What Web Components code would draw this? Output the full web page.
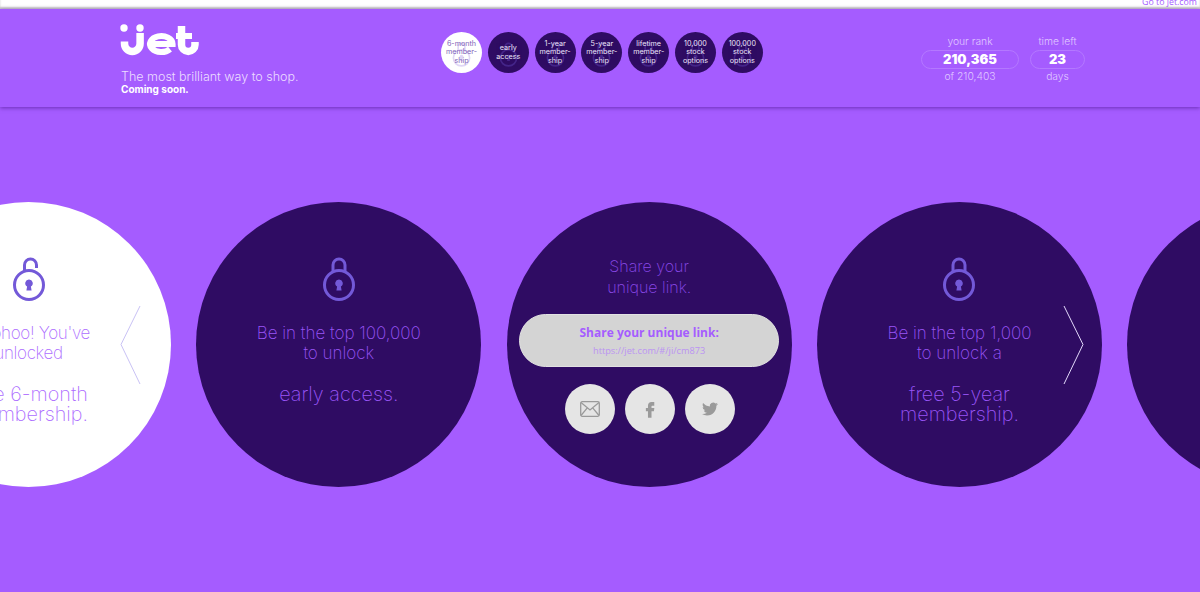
<!DOCTYPE html>
<html>
<head>
<meta charset="utf-8">
<title>Jet - rewards</title>
<style>
  html, body { margin: 0; height: 592px; overflow: hidden; background: #a55cff; font-family: Inter, "Liberation Sans", sans-serif; }
</style>
</head>
<body>
<jet-topbar></jet-topbar>
<jet-header>
  <reward-dot active>6-month<br>member-<br>ship</reward-dot>
  <reward-dot>early<br>access</reward-dot>
  <reward-dot>1-year<br>member-<br>ship</reward-dot>
  <reward-dot>5-year<br>member-<br>ship</reward-dot>
  <reward-dot>lifetime<br>member-<br>ship</reward-dot>
  <reward-dot>10,000<br>stock<br>options</reward-dot>
  <reward-dot>100,000<br>stock<br>options</reward-dot>
  <stat-box slot="stats" label="your rank" value="210,365" note="of 210,403" style="width:98px"></stat-box>
  <stat-box slot="stats" label="time left" value="23" note="days" style="width:55px"></stat-box>
</jet-header>
<reward-carousel>
  <reward-circle light open-lock line1="Woohoo! You've" line2="unlocked" prize="free 6-month<br>membership."></reward-circle>
  <reward-circle line1="Be in the top 100,000" line2="to unlock" prize="early access."></reward-circle>
  <share-circle url="https://jet.com/#/ji/cm873"></share-circle>
  <reward-circle line1="Be in the top 1,000" line2="to unlock a" prize="free 5-year<br>membership."></reward-circle>
  <reward-circle></reward-circle>
</reward-carousel>

<script>
  const LOCK_CLOSED = 'M11 15 V8 a6 6 0 0 1 12 0 V15';
  const LOCK_OPEN = 'M12.500 15 V8 a6 6 0 0 1 12 0 V11';

  class lockIcon extends HTMLElement {
    constructor () {
      super();
      const shackle = this.hasAttribute('open') ? LOCK_OPEN : LOCK_CLOSED;
      this.attachShadow({mode: 'open'}).innerHTML = `
        <style>:host { display: block; width: 34px; height: 44px; color: #7359d8; } svg { display: block; width: 100%; height: 100%; }</style>
        <svg viewBox="0 0 34 44" fill="none" stroke="currentColor" stroke-width="3">
          <path d="${shackle}"/>
          <circle cx="17" cy="28" r="14.500"/>
          <path d="M17 22.500a3.700 3.700 0 0 1 1.900 6.900l.7 4.100h-5.200l.7-4.100a3.700 3.700 0 0 1 1.900-6.900z" fill="currentColor" stroke="none"/>
        </svg>`;
    }
  }
  customElements.define('lock-icon', lockIcon);

  class jetLogo extends HTMLElement {
    constructor () {
      super();
      this.attachShadow({mode: 'open'}).innerHTML = `
        <style>:host { display: block; width: 80px; height: 33px; margin-left: -1px; } svg { display: block; }</style>
        <svg width="80" height="33" viewBox="120 24 80 33" fill="none" stroke="#fff" stroke-width="7">
          <circle cx="124" cy="28" r="3.700" fill="#fff" stroke="none"/>
          <circle cx="140" cy="28" r="3.700" fill="#fff" stroke="none"/>
          <path d="M124.500 41.500v2a7.800 8 0 0 0 15.600 0V33" stroke-width="7.500"/>
          <path d="M150 44h22.600A11.300 8 0 1 0 170 49.100" stroke-width="6"/>
          <path d="M181.500 26V44.700a6.750 6.750 0 0 0 13.500 0V42" stroke-width="7.500"/>
          <path d="M176 36h16" stroke-width="6"/>
        </svg>`;
    }
  }
  customElements.define('jet-logo', jetLogo);

  class jetTopbar extends HTMLElement {
    constructor () {
      super();
      this.attachShadow({mode: 'open'}).innerHTML = `
        <style>
          :host { display: flex; justify-content: flex-end; height: 9px; overflow: hidden; background: #fff; box-shadow: inset 0 -2px 2px rgba(0,0,0,.22); }
          span { margin: -4px 3px 0 0; font: 8.800px/12px "Open Sans", sans-serif; color: #a55cff; }
        </style>
        <span>Go to jet.com</span>`;
    }
  }
  customElements.define('jet-topbar', jetTopbar);

  class jetHeader extends HTMLElement {
    constructor () {
      super();
      this.attachShadow({mode: 'open'}).innerHTML = `
        <style>
          :host { display: flex; position: relative; height: 98px; box-sizing: border-box; padding: 15px 0 0 121px; background: #a55cff; box-shadow: 0 1px 4px rgba(60,10,120,.55); color: #fff; }
          .brand { width: 320px; }
          .tag { margin-top: 12px; font-size: 12.500px; font-weight: 300; line-height: 15px; color: #ecdcff; white-space: nowrap; }
          .soon { font-size: 10px; font-weight: 700; line-height: 11px; color: #fff; }
          nav { display: flex; gap: 5.800px; width: 480px; padding-top: 8px; box-sizing: border-box; }
          .stats { display: flex; gap: 11px; padding-top: 11px; }
        </style>
        <div class="brand">
          <jet-logo></jet-logo>
          <div class="tag">The most brilliant way to shop.</div>
          <div class="soon">Coming soon.</div>
        </div>
        <nav><slot></slot></nav>
        <div class="stats"><slot name="stats"></slot></div>`;
    }
  }
  customElements.define('jet-header', jetHeader);

  class rewardDot extends HTMLElement {
    constructor () {
      super();
      this.attachShadow({mode: 'open'}).innerHTML = `
        <style>
          :host { display: grid; place-items: center; flex: none; width: 41px; height: 41px; border-radius: 50%; background: #2f0c63; color: #efe6fb; font-size: 7.200px; line-height: 8.400px; text-align: center; position: relative; overflow: hidden; }
          :host([active]) { background: #fff; color: #7d5eb8; }
          lock-icon { grid-area: 1 / 1; width: 19px; height: 25px; margin-top: 4px; opacity: .32; }
          :host([active]) lock-icon { color: #c7b6ee; opacity: .55; }
          div { grid-area: 1 / 1; position: relative; white-space: nowrap; opacity: .99; }
        </style>
        <lock-icon></lock-icon>
        <div><slot></slot></div>`;
    }
  }
  customElements.define('reward-dot', rewardDot);

  class statBox extends HTMLElement {
    constructor () {
      super();
      this.attachShadow({mode: 'open'}).innerHTML = `
        <style>
          :host { display: block; text-align: center; font-size: 10.300px; font-weight: 300; line-height: 13px; color: #e0c9ff; }
          .pill { margin: 2px 0 1px; height: 19px; box-sizing: border-box; border: 1px solid #b478ff; border-radius: 10px; font-size: 13px; line-height: 17px; font-weight: 900; color: #fff; }
        </style>
        <div>${this.getAttribute('label')}</div>
        <div class="pill">${this.getAttribute('value')}</div>
        <div>${this.getAttribute('note')}</div>`;
    }
  }
  customElements.define('stat-box', statBox);

  class rewardCarousel extends HTMLElement {
    constructor () {
      super();
      this.attachShadow({mode: 'open'}).innerHTML = `
        <style>
          :host { display: flex; position: relative; gap: 25.330px; margin: 95px 0 0 -114px; width: 1700px; }
          svg { position: absolute; top: 103px; width: 21px; height: 80px; fill: none; stroke-width: 1; }
          .prev { left: 234px; stroke: #c9c2f5; }
          .next { left: 1176.500px; stroke: #e3d9fb; }
        </style>
        <slot></slot>
        <svg class="prev" viewBox="0 0 21 80"><path d="M20 1 1 39.500 20 79"/></svg>
        <svg class="next" viewBox="0 0 21 80"><path d="M1 1 20 39.500 1 79"/></svg>`;
    }
  }
  customElements.define('reward-carousel', rewardCarousel);

  class rewardCircle extends HTMLElement {
    constructor () {
      super();
      const line1 = this.getAttribute('line1');
      this.attachShadow({mode: 'open'}).innerHTML = `
        <style>
          :host { display: flex; flex-direction: column; align-items: center; flex: none; width: 285px; height: 285px; box-sizing: border-box; padding-top: 55px; border-radius: 50%; background: #2f0c63; color: #9a55f8; font-weight: 200; text-align: center; white-space: nowrap; }
          :host([light]) { background: #fff; color: #ad6dff; }
          :host([light]) .ask { letter-spacing: -.350px; }
          .ask { margin-top: 22px; font-size: 17px; line-height: 20px; }
          .prize { margin-top: 21px; font-size: 19.800px; line-height: 20px; }
        </style>
        ${line1 ? `
        <lock-icon ${this.hasAttribute('open-lock') ? 'open' : ''}></lock-icon>
        <div class="ask">${line1}<br>${this.getAttribute('line2')}</div>
        <div class="prize">${this.getAttribute('prize')}</div>` : ''}`;
    }
  }
  customElements.define('reward-circle', rewardCircle);

  class shareCircle extends HTMLElement {
    constructor () {
      super();
      this.attachShadow({mode: 'open'}).innerHTML = `
        <style>
          :host { display: flex; flex-direction: column; align-items: center; flex: none; width: 285px; height: 285px; box-sizing: border-box; padding-top: 54px; border-radius: 50%; background: #2f0c63; color: #8a48e8; }
          .title { font-size: 16px; font-weight: 200; line-height: 21px; text-align: center; }
          .link { display: flex; flex-direction: column; align-items: center; width: 260px; height: 53px; box-sizing: border-box; margin-top: 16px; padding-top: 9px; border-radius: 27px; background: #d4d4d4; border: 1px solid #e2e2e2; font-family: "Open Sans", sans-serif; }
          .link b { font-size: 12px; line-height: 17px; color: #a55cff; }
          .link span { margin-top: 3px; font-size: 9.200px; line-height: 14px; color: #bb93f3; }
          .social { display: flex; gap: 10px; margin: 17px 0 0 1px; }
          .social div { display: grid; place-items: center; width: 50px; height: 50px; border-radius: 50%; background: #e5e5e5; }
          svg { display: block; }
          .solid { fill: #9a9a9a; }
        </style>
        <div class="title">Share your<br>unique link.</div>
        <div class="link"><b>Share your unique link:</b><span>${this.getAttribute('url')}</span></div>
        <div class="social">
          <div><svg width="20" height="16" viewBox="0 0 20 16" fill="none" stroke="#9a9a9a" stroke-width="1.300"><rect x=".7" y=".7" width="18.600" height="14.600" rx="1.500"/><path d="M1 1.500 10 9l9-7.500M1 14.500 7.300 6.800M19 14.500l-6.300-7.700"/></svg></div>
          <div><svg class="solid" width="18" height="18" viewBox="0 0 24 24"><path d="M14.500 7.500h3.200V2.500h-3.600C11 2.500 9.300 4.500 9.300 7.800v3H6.500V15h2.800v8.500h4.700V15h3.200l.6-4.200h-3.800V8.400c0-.6.2-.9.700-.9z"/></svg></div>
          <div><svg class="solid" width="16" height="16" viewBox="0 0 24 24"><path d="M23.953 4.570a10 10 0 01-2.825.775 4.958 4.958 0 002.163-2.723c-.951.555-2.005.959-3.127 1.184a4.920 4.920 0 00-8.384 4.482C7.690 8.095 4.067 6.130 1.640 3.162a4.822 4.822 0 00-.666 2.475c0 1.710.870 3.213 2.188 4.096a4.904 4.904 0 01-2.228-.616v.060a4.923 4.923 0 003.946 4.827 4.996 4.996 0 01-2.212.085 4.936 4.936 0 004.604 3.417 9.867 9.867 0 01-6.102 2.105c-.390 0-.779-.023-1.170-.067a13.995 13.995 0 007.557 2.209c9.053 0 13.998-7.496 13.998-13.985 0-.210 0-.420-.015-.630A9.935 9.935 0 0024 4.590z"/></svg></div>
        </div>`;
    }
  }
  customElements.define('share-circle', shareCircle);
</script>
</body>
</html>
